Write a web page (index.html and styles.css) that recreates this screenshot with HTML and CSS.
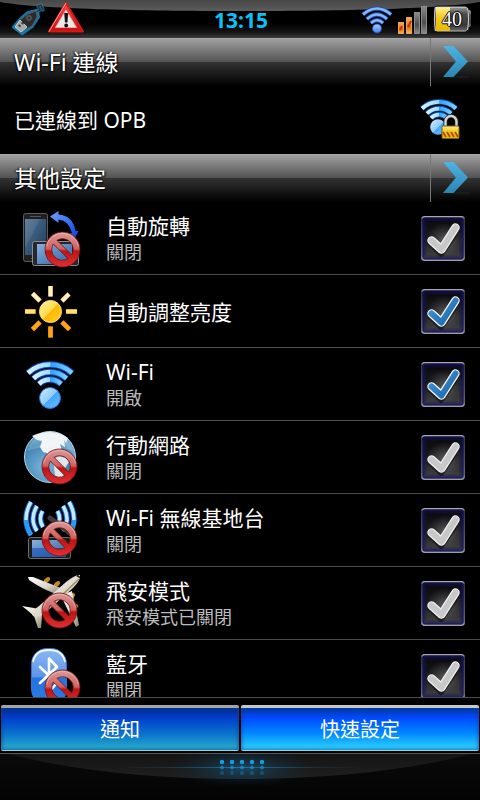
FILE: index.html
```html
<!DOCTYPE html>
<html lang="zh-Hant">
<head>
<meta charset="utf-8">
<meta name="viewport" content="width=device-width, initial-scale=1">
<title>快速設定</title>
<link rel="stylesheet" href="styles.css">
</head>
<body>
<svg class="defs" width="0" height="0" aria-hidden="true">
  <defs>
    <linearGradient id="blueArc" x1="0" y1="0" x2="1" y2="0">
      <stop offset="0" stop-color="#d6f2ff"/><stop offset=".49" stop-color="#9fdcff"/><stop offset=".52" stop-color="#2fa0ff"/><stop offset="1" stop-color="#7fd0ff"/>
    </linearGradient>
    <linearGradient id="ball" x1="0" y1="0" x2="1" y2="1">
      <stop offset="0" stop-color="#d8f1ff"/><stop offset=".5" stop-color="#8ccbff"/><stop offset=".52" stop-color="#48a8f8"/><stop offset="1" stop-color="#67bdff"/>
    </linearGradient>
    <linearGradient id="statusBlue" x1="0" y1="0" x2="0" y2="1">
      <stop offset="0" stop-color="#a9ccff"/><stop offset="1" stop-color="#3f82f0"/>
    </linearGradient>
    <linearGradient id="red" x1="0" y1="0" x2="0" y2="1">
      <stop offset="0" stop-color="#d99a98"/><stop offset=".48" stop-color="#d2605e"/><stop offset=".55" stop-color="#bd1414"/><stop offset="1" stop-color="#e03032"/>
    </linearGradient>
    <linearGradient id="chev" x1="0" y1="0" x2="0" y2="1">
      <stop offset="0" stop-color="#4db4e4"/><stop offset="1" stop-color="#2b86b4"/>
    </linearGradient>
    <linearGradient id="screen" x1="0" y1="0" x2="1" y2="1">
      <stop offset="0" stop-color="#587596"/><stop offset=".5" stop-color="#375778"/><stop offset="1" stop-color="#1c3e66"/>
    </linearGradient>
    <linearGradient id="screenLight" x1="0" y1="0" x2="1" y2="1">
      <stop offset="0" stop-color="#86b0dc"/><stop offset="1" stop-color="#2c62a8"/>
    </linearGradient>
    <linearGradient id="turn" x1="0" y1="0" x2="1" y2="1">
      <stop offset="0" stop-color="#6fa4ff"/><stop offset="1" stop-color="#0a3fe0"/>
    </linearGradient>
    <linearGradient id="sun" x1="0" y1="0" x2="1" y2="1">
      <stop offset="0" stop-color="#fff0a0"/><stop offset=".48" stop-color="#ffdc50"/><stop offset=".52" stop-color="#ffb800"/><stop offset="1" stop-color="#ffd030"/>
    </linearGradient>
    <radialGradient id="globe" cx=".4" cy=".7" r=".8">
      <stop offset="0" stop-color="#7db6dc"/><stop offset=".6" stop-color="#3f84b4"/><stop offset="1" stop-color="#9cc8e6"/>
    </radialGradient>
    <linearGradient id="plane" x1="0" y1="0" x2="1" y2="1">
      <stop offset="0" stop-color="#ffffff"/><stop offset=".55" stop-color="#ddd8ca"/><stop offset="1" stop-color="#8e8672"/>
    </linearGradient>
    <linearGradient id="bt" x1="0" y1="0" x2="0" y2="1">
      <stop offset="0" stop-color="#8db8f2"/><stop offset=".5" stop-color="#5a97ea"/><stop offset=".53" stop-color="#2473df"/><stop offset="1" stop-color="#2b7be8"/>
    </linearGradient>
    <linearGradient id="boxFill" x1="0" y1="0" x2="0" y2="1">
      <stop offset="0" stop-color="#08080c"/><stop offset=".5" stop-color="#1a1a1c"/><stop offset="1" stop-color="#474747"/>
    </linearGradient>
    <linearGradient id="boxEdge" x1="0" y1="0" x2="0" y2="1">
      <stop offset="0" stop-color="#a9a9b0"/><stop offset=".06" stop-color="#34344c"/><stop offset=".9" stop-color="#62627a"/><stop offset="1" stop-color="#9c9cac"/>
    </linearGradient>
    <linearGradient id="tickBlue" x1="0" y1="0" x2="1" y2="1">
      <stop offset="0" stop-color="#3f95d8"/><stop offset="1" stop-color="#1c66a8"/>
    </linearGradient>
    <radialGradient id="tickHalo">
      <stop offset="0" stop-color="#aaa" stop-opacity=".45"/><stop offset="1" stop-color="#888" stop-opacity="0"/>
    </radialGradient>
    <linearGradient id="gloss" x1="0" y1="0" x2="0" y2="1">
      <stop offset="0" stop-color="#474747"/><stop offset="1" stop-color="#5c5c5c"/>
    </linearGradient>
    <linearGradient id="warn" x1="0" y1="0" x2="0" y2="1">
      <stop offset="0" stop-color="#f2504a"/><stop offset="1" stop-color="#c81010"/>
    </linearGradient>
    <linearGradient id="orange" x1="0" y1="0" x2="0" y2="1">
      <stop offset="0" stop-color="#ffb060"/><stop offset=".6" stop-color="#e06810"/><stop offset="1" stop-color="#ffc040"/>
    </linearGradient>
    <linearGradient id="grey" x1="0" y1="0" x2="0" y2="1">
      <stop offset="0" stop-color="#8a8a8a"/><stop offset=".6" stop-color="#4e4e4e"/><stop offset="1" stop-color="#8c8c8c"/>
    </linearGradient>
    <linearGradient id="gold" x1="0" y1="0" x2="0" y2="1">
      <stop offset="0" stop-color="#fff0a0"/><stop offset=".4" stop-color="#f2cc20"/><stop offset="1" stop-color="#e8b800"/>
    </linearGradient>
    <linearGradient id="cell" x1="0" y1="0" x2="0" y2="1">
      <stop offset="0" stop-color="#a8a8a8"/><stop offset=".3" stop-color="#4c4c4c"/><stop offset=".75" stop-color="#383838"/><stop offset="1" stop-color="#777"/>
    </linearGradient>
    <radialGradient id="panelGlow">
      <stop offset="0" stop-color="#1688cc" stop-opacity=".4"/><stop offset="1" stop-color="#0a3e66" stop-opacity="0"/>
    </radialGradient>
    <linearGradient id="beam" x1="0" y1="0" x2="1" y2="0">
      <stop offset="0" stop-color="#1a6ea8" stop-opacity="0"/><stop offset=".5" stop-color="#2a94d8" stop-opacity=".6"/><stop offset="1" stop-color="#1a6ea8" stop-opacity="0"/>
    </linearGradient>
    <linearGradient id="panelSheen" x1="0" y1="0" x2="0" y2="1">
      <stop offset="0" stop-color="#141414"/><stop offset="1" stop-color="#202020"/>
    </linearGradient>
    <g id="chevron">
      <path d="M6 31h22" stroke="#222" stroke-width="1"/>
      <path d="M0 0h10.500L25 15.500 10.500 31H0L13 15.500z" fill="url(#chev)"/>
    </g>
    <g id="banned">
      <path fill-rule="evenodd" d="M0-17.500A17.500 17.500 0 1 1 0 17.500A17.500 17.500 0 1 1 0-17.500zM-9.200-5.500A10.700 10.700 0 0 0 5.500 9.200zM-5.500-9.200A10.700 10.700 0 0 1 9.200 5.500z" fill="url(#red)" stroke="#6e1212" stroke-width=".8"/>
      <path d="M-16-3A16.300 16.300 0 0 1 16-3" fill="none" stroke="#ecc4c2" stroke-opacity=".6" stroke-width="1"/>
    </g>
    <g id="waves">
      <g fill="none" stroke="#0a4fc0" stroke-width="6.500">
        <path d="M28 25A33 33 0 0 1 72 25"/><path d="M33.500 30.500A24 24 0 0 1 66.500 30.500"/><path d="M39 36A16 16 0 0 1 61 36"/>
      </g>
      <g fill="none" stroke="url(#blueArc)" stroke-width="4.500">
        <path d="M28 25A33 33 0 0 1 72 25"/><path d="M33.500 30.500A24 24 0 0 1 66.500 30.500"/><path d="M39 36A16 16 0 0 1 61 36"/>
      </g>
      <circle cx="50" cy="50" r="10.500" fill="url(#ball)" stroke="#1a74e0" stroke-width="1"/>
    </g>
    <g id="tickbox">
      <rect x=".75" y=".75" width="42.500" height="43.500" rx="3" fill="url(#boxFill)" stroke="url(#boxEdge)" stroke-width="1.500"/>
      <rect x="2.500" y="2.500" width="39" height="40" rx="2" fill="none" stroke="#14146a" stroke-opacity=".75" stroke-width="2"/>
      <rect x="4.500" y="4.500" width="35" height="36" rx="2" fill="none" stroke="#14145a" stroke-opacity=".35" stroke-width="2"/>
      <ellipse cx="24" cy="24" rx="19" ry="17" fill="url(#tickHalo)"/>
      <path d="M9 27l11 11L33 19" fill="none" stroke="#111" stroke-opacity=".7" stroke-width="6" stroke-linecap="round" stroke-linejoin="round"/>
    </g>
    <g id="tick-off">
      <use href="#tickbox"/>
      <path d="M10.500 24.500l10 9L34.500 11.500" fill="none" stroke="#efefef" stroke-width="8.500" stroke-linecap="round" stroke-linejoin="round"/>
      <path d="M10.500 24.500l10 9L34.500 11.500" fill="none" stroke="#c8c8c8" stroke-width="6" stroke-linecap="round" stroke-linejoin="round"/>
    </g>
    <g id="tick-on">
      <use href="#tickbox"/>
      <path d="M10.500 24.500l10 9L34.500 11.500" fill="none" stroke="#f2f6fa" stroke-width="8.500" stroke-linecap="round" stroke-linejoin="round"/>
      <path d="M10.500 24.500l10 9L34.500 11.500" fill="none" stroke="url(#tickBlue)" stroke-width="6" stroke-linecap="round" stroke-linejoin="round"/>
    </g>
  </defs>
</svg>

<header class="status">
  <svg class="status-gloss" viewBox="0 0 480 12" preserveAspectRatio="none" aria-hidden="true">
    <path d="M0 0H480V2C440 9 340 11 240 11S40 9 0 2z" fill="url(#gloss)"/>
  </svg>
  <div class="status-left">
    <svg width="36" height="36" viewBox="10 0 36 36" aria-hidden="true">
      <g fill="none" stroke="#1a9cd8" stroke-linejoin="round" stroke-linecap="round">
        <path d="M14 27L22 18 28 13 37 11 38 17 32 26 22 33z" stroke-width="4" opacity=".75"/>
        <path d="M36 12l4-2-2-4 3-1 2 5" stroke-width="3.500" opacity=".6"/>
      </g>
      <path d="M36 12l4-2-2-4 3-1 2 5" fill="none" stroke="#333" stroke-width="1.500"/>
      <path d="M20 20l8-6 8-3 1 6-5 9-6 3z" fill="#2c2c2e" stroke="#555" stroke-width="1"/>
      <path d="M20 20l7 7-6 5-6-5z" fill="#a8a8a8" stroke="#ddd" stroke-width=".8"/>
      <path d="M18.500 25l2 1.500M21.500 22.500l2 1.500" stroke="#333" stroke-width="1.600"/>
      <circle cx="29" cy="18" r="2.200" fill="none" stroke="#777"/>
    </svg>
    <svg width="38" height="36" viewBox="47 0 38 36" aria-hidden="true">
      <path d="M66 3L83 31.500H49z" fill="url(#warn)" stroke="#d41818" stroke-width="2" stroke-linejoin="round"/>
      <path d="M66 3L49 31.500" stroke="#ff9d98" stroke-width="1"/>
      <path d="M66 10L76.500 27.500H55.500z" fill="#e9eaea" stroke="#f6b0ac" stroke-width=".8"/>
      <path d="M64.200 13h4l-.8 9.500h-2.400z" fill="#111"/><circle cx="66.200" cy="25.500" r="1.900" fill="#111"/>
    </svg>
  </div>
  <time class="clock">13:15</time>
  <div class="status-right">
    <svg width="34" height="36" viewBox="360 0 34 36" aria-hidden="true">
      <g fill="none" stroke="#1c4cae" stroke-width="4.200">
        <path d="M363 14.500Q377 2.500 391 14.500"/><path d="M367 19Q377 10 387 19"/><path d="M371 23Q377 17.500 383 23"/>
      </g>
      <g fill="none" stroke="#84b8fb" stroke-width="2.600">
        <path d="M363 14.500Q377 2.500 391 14.500"/><path d="M367 19Q377 10 387 19"/><path d="M371 23Q377 17.500 383 23"/>
      </g>
      <circle cx="377" cy="28.500" r="4.500" fill="url(#statusBlue)" stroke="#1c4cae" stroke-width=".8"/>
    </svg>
    <svg width="32" height="36" viewBox="397 0 32 36" aria-hidden="true">
      <g stroke="#e6a050" fill="url(#orange)" stroke-width="1"><rect x="398.500" y="22.500" width="5" height="11"/><rect x="406.500" y="17.500" width="5" height="16"/></g>
      <g stroke="#8a8a8a" fill="url(#grey)" stroke-width="1"><rect x="414.500" y="12.500" width="5" height="21"/><rect x="421.500" y="6.500" width="5" height="27"/></g>
      <path d="M400 30l2-4M408 27l3-6" stroke="#b83808" stroke-width="2"/>
    </svg>
    <span class="battery">
      <svg width="40" height="36" viewBox="432 0 40 36" aria-hidden="true">
        <rect x="465" y="10" width="6" height="17" rx="2" fill="url(#cell)"/>
        <rect x="434" y="6" width="34" height="26" rx="3" fill="url(#cell)" stroke="#111"/>
        <rect x="436" y="7" width="14" height="24" fill="url(#gold)"/>
        <path d="M435.500 7q-2 12 0 24M467.500 8q2 11 0 22" fill="none" stroke="#c8c8c8" stroke-width="1.200"/>
        <path d="M437 7.500h29M437 31h29" stroke="#ddd" stroke-opacity=".5"/>
      </svg>
      <span class="battery-level">40</span>
    </span>
  </div>
</header>

<main class="content">
  <section>
    <a class="bar" href="#wifi">
      <h2 class="bar-title">Wi-Fi 連線</h2>
      <span class="bar-go"><svg width="26" height="32" viewBox="0 0 26 32" aria-hidden="true"><use href="#chevron"/></svg></span>
    </a>
    <div class="connection">
      <p class="connection-text">已連線到 OPB</p>
      <svg width="44" height="44" viewBox="418 98 44 44" aria-hidden="true">
        <g fill="none" stroke="#0a4fa8" stroke-width="5.500"><path d="M422 108.500A25 25 0 0 1 456 108.500"/><path d="M427 113.500A17 17 0 0 1 451 113.500"/><path d="M431 118A11 11 0 0 1 447 118"/></g>
        <g fill="none" stroke="url(#blueArc)" stroke-width="3.800"><path d="M422 108.500A25 25 0 0 1 456 108.500"/><path d="M427 113.500A17 17 0 0 1 451 113.500"/><path d="M431 118A11 11 0 0 1 447 118"/></g>
        <circle cx="438" cy="127" r="7.800" fill="url(#ball)"/>
        <path d="M445.500 127v-5.500a5.500 5.500 0 0 1 11 0V127" fill="none" stroke="#222" stroke-width="4"/>
        <path d="M445.500 127v-5.500a5.500 5.500 0 0 1 11 0V127" fill="none" stroke="#d4d4d4" stroke-width="2.400"/>
        <rect x="442" y="126" width="17" height="12.500" rx="1" fill="url(#gold)" stroke="#7c6008"/>
        <path d="M443 132l3 5M447 132l3 5M451 132l3 5M455 132l3 5" stroke="#b04810" stroke-width="1.800"/>
      </svg>
    </div>
  </section>

  <section class="settings">
    <a class="bar" href="#settings">
      <h2 class="bar-title">其他設定</h2>
      <span class="bar-go"><svg width="26" height="32" viewBox="0 0 26 32" aria-hidden="true"><use href="#chevron"/></svg></span>
    </a>
    <ul class="list">
      <li><label class="row">
        <svg class="icon" viewBox="18 0 64 72" aria-hidden="true">
          <rect x="23.500" y="11.500" width="24" height="48" rx="2" fill="#1d1f22" stroke="#5c5c5c"/>
          <rect x="25" y="17" width="21" height="36" fill="url(#screen)"/>
          <path d="M25 17h15L25 46z" fill="#fff" opacity=".08"/><path d="M30 14.500h11M31 56.500h9" stroke="#555"/>
          <rect x="32.500" y="39.500" width="46" height="24" rx="2" fill="#26282b" stroke="#8c8c8c"/>
          <rect x="37" y="42" width="35" height="20" fill="url(#screenLight)"/>
          <path d="M50 14.500L58.500 9v3.500Q73 13.500 75.500 29H78.500L75 36 69 31h3Q69 18.500 58.500 17.500V21z" fill="url(#turn)"/>
          <use href="#banned" x="62.500" y="47.500"/>
        </svg>
        <span class="text"><span class="title">自動旋轉</span><span class="note">關閉</span></span>
        <span class="check"><input type="checkbox" class="check-input"><svg class="check-art" viewBox="0 0 44 45" aria-hidden="true"><use href="#tick-off"/></svg></span>
      </label></li>
      <li><label class="row">
        <svg class="icon" viewBox="18 0 64 72" aria-hidden="true">
          <g stroke="#c87800" stroke-width="5"><path d="M50.500 11v10.500M50.500 51.500v11M25 36.500h10.500M66 36.500h11M32.500 18.500l7.500 7.500M69 19l-7 7M32.500 54.500l7.500-7.500M69.500 54.500l-7.500-7.500"/></g>
          <g stroke="#fff4c8" stroke-width="4"><path d="M50.500 11v10.500M32.500 18.500l7.500 7.500M69 19l-7 7"/></g>
          <g stroke="#ffe270" stroke-width="4"><path d="M25 36.500h10.500M66 36.500h11"/></g>
          <g stroke="#ffa418" stroke-width="4"><path d="M50.500 51.500v11M32.500 54.500l7.500-7.500M69.500 54.500l-7.500-7.500"/></g>
          <circle cx="50.500" cy="36.500" r="11" fill="url(#sun)" stroke="#ffe070" stroke-width="1"/>
        </svg>
        <span class="text"><span class="title">自動調整亮度</span></span>
        <span class="check"><input type="checkbox" class="check-input" checked><svg class="check-art" viewBox="0 0 44 45" aria-hidden="true"><use href="#tick-on"/></svg></span>
      </label></li>
      <li><label class="row">
        <svg class="icon" viewBox="18 0 64 72" aria-hidden="true"><use href="#waves"/></svg>
        <span class="text"><span class="title">Wi-Fi</span><span class="note">開啟</span></span>
        <span class="check"><input type="checkbox" class="check-input" checked><svg class="check-art" viewBox="0 0 44 45" aria-hidden="true"><use href="#tick-on"/></svg></span>
      </label></li>
      <li><label class="row">
        <svg class="icon" viewBox="18 0 64 72" aria-hidden="true">
          <circle cx="50" cy="36" r="25.500" fill="url(#globe)" stroke="#b6d6ea" stroke-width="1"/>
          <path d="M32 15Q40 11 50 11T68 17L66 22 64 19 65 26 60 23 62 30 57 29 53 33 50 38 47 32 43 31 40 26 42 20 37 19z" fill="#eef3f6"/>
          <path d="M53 38l6-3 7 2 3 4-4 6-2 9-5 4-3-6z" fill="#dfe7ea"/>
          <path d="M27 30A24 24 0 0 1 73 30Q50 22 27 30z" fill="#fff" opacity=".18"/>
          <use href="#banned" x="59.500" y="45.500"/>
        </svg>
        <span class="text"><span class="title">行動網路</span><span class="note">關閉</span></span>
        <span class="check"><input type="checkbox" class="check-input"><svg class="check-art" viewBox="0 0 44 45" aria-hidden="true"><use href="#tick-off"/></svg></span>
      </label></li>
      <li><label class="row">
        <svg class="icon" viewBox="18 0 64 72" aria-hidden="true">
          <g fill="none" stroke="#0a64d8" stroke-width="5.500"><path d="M31 8Q21 25 31 41"/><path d="M37 12Q29 25 37 37"/><path d="M42.500 17Q38 25 43 33"/><path d="M69 8Q79 25 69 41"/><path d="M63 12Q71 25 63 37"/><path d="M57.500 17Q62 25 57 33"/></g>
          <g fill="none" stroke="#c4ebff" stroke-width="3.500"><path d="M31 8Q21 25 31 41"/><path d="M37 12Q29 25 37 37"/><path d="M42.500 17Q38 25 43 33"/><path d="M69 8Q79 25 69 41"/><path d="M63 12Q71 25 63 37"/><path d="M57.500 17Q62 25 57 33"/></g>
          <path d="M26 26Q26 34 31 41M74 26Q74 34 69 41" fill="none" stroke="#279af5" stroke-width="4"/>
          <path d="M50 24l11 8 9 7" stroke="#3c3c3c" stroke-width="5" stroke-linecap="round" fill="none"/>
          <rect x="28.500" y="43.500" width="42" height="21" rx="2" fill="#1c1c1e" stroke="#6e6e6e"/>
          <rect x="32" y="46" width="34" height="17" fill="url(#screenLight)"/><path d="M32 54h34v9H32z" fill="#1550b8" opacity=".6"/>
          <use href="#banned" x="59.500" y="44.500"/>
        </svg>
        <span class="text"><span class="title">Wi-Fi 無線基地台</span><span class="note">關閉</span></span>
        <span class="check"><input type="checkbox" class="check-input"><svg class="check-art" viewBox="0 0 44 45" aria-hidden="true"><use href="#tick-off"/></svg></span>
      </label></li>
      <li><label class="row">
        <svg class="icon" viewBox="18 0 64 72" aria-hidden="true">
          <g fill="#c08a20"><ellipse cx="47" cy="13" rx="3.500" ry="2.200" transform="rotate(-38 47 13)"/><ellipse cx="57" cy="17" rx="3.500" ry="2.200" transform="rotate(-38 57 17)"/><ellipse cx="72" cy="29" rx="3.500" ry="2.200" transform="rotate(-38 72 29)"/><ellipse cx="75" cy="40" rx="3.500" ry="2.200" transform="rotate(-38 75 40)"/></g>
          <path d="M28 10l5 0 28 11-5 6Q42 22 29 13z" fill="url(#plane)"/>
          <path d="M67 26l5-2 7 34-3 2-14-29z" fill="url(#plane)"/>
          <path d="M22 39l12 2 7 2 1 6-1 12-3 0-4-12-7-6z" fill="url(#plane)"/>
          <path d="M80 8q1 5-7 13L45 46q-7 6-12 3l-2-4 8-6 27-24q10-8 14-7z" fill="url(#plane)"/>
          <path d="M79 12L44 45" stroke="#9f8d5e" stroke-width="1.500"/><path d="M77 8.500l3 2" stroke="#222" stroke-width="1.800"/>
          <use href="#banned" x="59.500" y="43.500"/>
        </svg>
        <span class="text"><span class="title">飛安模式</span><span class="note">飛安模式已關閉</span></span>
        <span class="check"><input type="checkbox" class="check-input"><svg class="check-art" viewBox="0 0 44 45" aria-hidden="true"><use href="#tick-off"/></svg></span>
      </label></li>
      <li><label class="row">
        <svg class="icon" viewBox="18 0 64 72" aria-hidden="true">
          <rect x="31.500" y="8.500" width="35" height="56" rx="15" fill="url(#bt)" stroke="#2a78dc"/>
          <path d="M33 22Q35 10 49 10T65 22" fill="none" stroke="#f2f8ff" stroke-width="1.800"/>
          <path d="M40 27L57 43 49 52V18.500L57 27 40 43" fill="none" stroke="#fff" stroke-width="2.600" stroke-linejoin="round" stroke-linecap="round"/>
          <use href="#banned" x="62.500" y="47.500"/>
        </svg>
        <span class="text"><span class="title">藍牙</span><span class="note">關閉</span></span>
        <span class="check"><input type="checkbox" class="check-input"><svg class="check-art" viewBox="0 0 44 45" aria-hidden="true"><use href="#tick-off"/></svg></span>
      </label></li>
    </ul>
  </section>
</main>

<nav class="tabs">
  <button type="button" class="tab">通知</button>
  <button type="button" class="tab tab-active">快速設定</button>
</nav>

<footer class="handle">
  <svg class="handle-sheen" viewBox="0 0 480 46" preserveAspectRatio="none" aria-hidden="true">
    <path d="M0 0H480Q400 25 240 25T0 0z" fill="none"/>
    <path d="M8 0H472C400 18 320 25 240 25S80 18 8 0z" fill="url(#panelSheen)"/>
    <ellipse cx="242" cy="14" rx="72" ry="20" fill="url(#panelGlow)"/>
    <rect x="120" y="13" width="240" height="1" fill="url(#beam)"/>
  </svg>
  <svg class="handle-dots" width="48" height="20" viewBox="218 757 48 20" aria-hidden="true">
    <g fill="#189be0"><circle cx="222" cy="762" r="2.200"/><circle cx="232" cy="762" r="2.200"/><circle cx="242" cy="762" r="2.200"/><circle cx="252" cy="762" r="2.200"/><circle cx="262" cy="762" r="2.200"/></g>
    <g fill="#189be0" opacity=".6"><circle cx="222" cy="767.500" r="2"/><circle cx="232" cy="767.500" r="2"/><circle cx="242" cy="767.500" r="2"/><circle cx="252" cy="767.500" r="2"/><circle cx="262" cy="767.500" r="2"/></g>
    <g fill="#189be0" opacity=".3"><circle cx="222" cy="773" r="2"/><circle cx="232" cy="773" r="2"/><circle cx="242" cy="773" r="2"/><circle cx="252" cy="773" r="2"/><circle cx="262" cy="773" r="2"/></g>
  </svg>
</footer>
</body>
</html>
```
FILE: styles.css
```css
* {
  box-sizing: border-box;
}

body {
  margin: 0;
  height: 100vh;
  display: flex;
  flex-direction: column;
  overflow: hidden;
  background: #000;
  color: #fff;
  font-family: "Noto Sans", "Noto Sans CJK TC", sans-serif;
}

svg {
  display: block;
  flex: none;
}

.defs {
  position: absolute;
}

/* Status bar */
.status {
  position: relative;
  display: grid;
  grid-template-columns: 1fr auto 1fr;
  align-items: center;
  padding: 0 8px 2px 10px;
  background: linear-gradient(#000 60%, #141414 85%, #3c3c3c);
}

.status-gloss {
  position: absolute;
  top: 0;
  left: 0;
  width: 100%;
  height: 12px;
}

.status-left,
.status-right {
  position: relative;
  display: flex;
  gap: 1px;
}

.status-right {
  justify-content: flex-end;
  gap: 3px;
}

.clock {
  position: relative;
  padding-top: 4px;
  color: #0cc0f8;
  font-size: 21px;
  font-weight: 700;
  line-height: 32px;
}

.battery {
  position: relative;
}

.battery-level {
  position: absolute;
  inset: 0;
  font-family: "Liberation Serif", serif;
  font-size: 20px;
  line-height: 38px;
  text-align: center;
  text-shadow: 1px 0 #000, -1px 0 #000, 0 1px #000, 0 -1px #000;
}

/* Sections */
.content {
  flex: 1;
  min-height: 0;
  display: flex;
  flex-direction: column;
  border-bottom: 1px solid #4c4c4c;
}

.settings {
  flex: 1;
  min-height: 0;
  overflow: hidden;
}

.bar {
  display: flex;
  height: 48px;
  color: #fff;
  text-decoration: none;
  background: linear-gradient(#b0b0b0 0, #a0a0a0 1px, #525252 24px, #333 24px, #000);
}

.bar-title {
  flex: 1;
  margin: 0;
  padding-left: 14px;
  font-size: 23px;
  font-weight: 400;
  line-height: 48px;
  text-shadow: 1px 1px 2px #000, -1px 0 2px #000;
}

.bar-go {
  display: flex;
  align-items: center;
  padding: 0 11px 0 12px;
  border-left: 1px solid #777;
}

.connection {
  display: flex;
  align-items: center;
  justify-content: space-between;
  height: 68px;
  padding: 0 18px 0 14px;
}

.connection-text {
  margin: 0;
  font-size: 21px;
  line-height: 28px;
}

/* Settings list */
.list {
  margin: 0;
  padding: 0;
  list-style: none;
}

.row {
  display: flex;
  align-items: center;
  height: 73px;
  padding: 0 15px 0 18px;
  border-bottom: 1px solid #4c4c4c;
}

.icon {
  width: 64px;
  height: 72px;
}

.text {
  flex: 1;
  display: flex;
  flex-direction: column;
  padding: 2px 0 0 24px;
}

.title {
  font-size: 21px;
  line-height: 26px;
}

.note {
  color: #bcbcbc;
  font-size: 18px;
  line-height: 26px;
}

.check {
  display: grid;
}

.check-input,
.check-art {
  grid-area: 1 / 1;
  width: 44px;
  height: 45px;
}

.check-input {
  appearance: none;
  margin: 0;
}

.check-art {
  pointer-events: none;
}

/* Tabs */
.tabs {
  display: grid;
  grid-template-columns: 1fr 1fr;
  gap: 2px;
  padding: 7px 1px 2px;
}

.tab {
  height: 46px;
  padding: 2px 0 0;
  border: 0;
  border-top: 3px solid #a4a4a4;
  border-bottom: 1px solid #8fd4e0;
  border-radius: 2px;
  color: #fff;
  font-family: inherit;
  font-size: 20px;
  line-height: 30px;
  background: linear-gradient(#002a90, #0040cc 25%, #0a70cc 60%, #28b0cc);
  box-shadow: inset 0 0 4px #0a4488;
}

.tab-active {
  border-top-color: #c8c8c8;
  background: linear-gradient(#0034a8, #004cff 25%, #0088ff 60%, #30d8ff);
}

/* Pull handle */
.handle {
  position: relative;
  display: flex;
  justify-content: center;
  height: 47px;
  padding: 3px 0 0 4px;
  border-top: 1px solid #585858;
  background: linear-gradient(#0a0a0a, #030303);
}

.handle-sheen {
  position: absolute;
  inset: 0;
  width: 100%;
  height: 100%;
}

.handle-dots {
  position: relative;
}
```
